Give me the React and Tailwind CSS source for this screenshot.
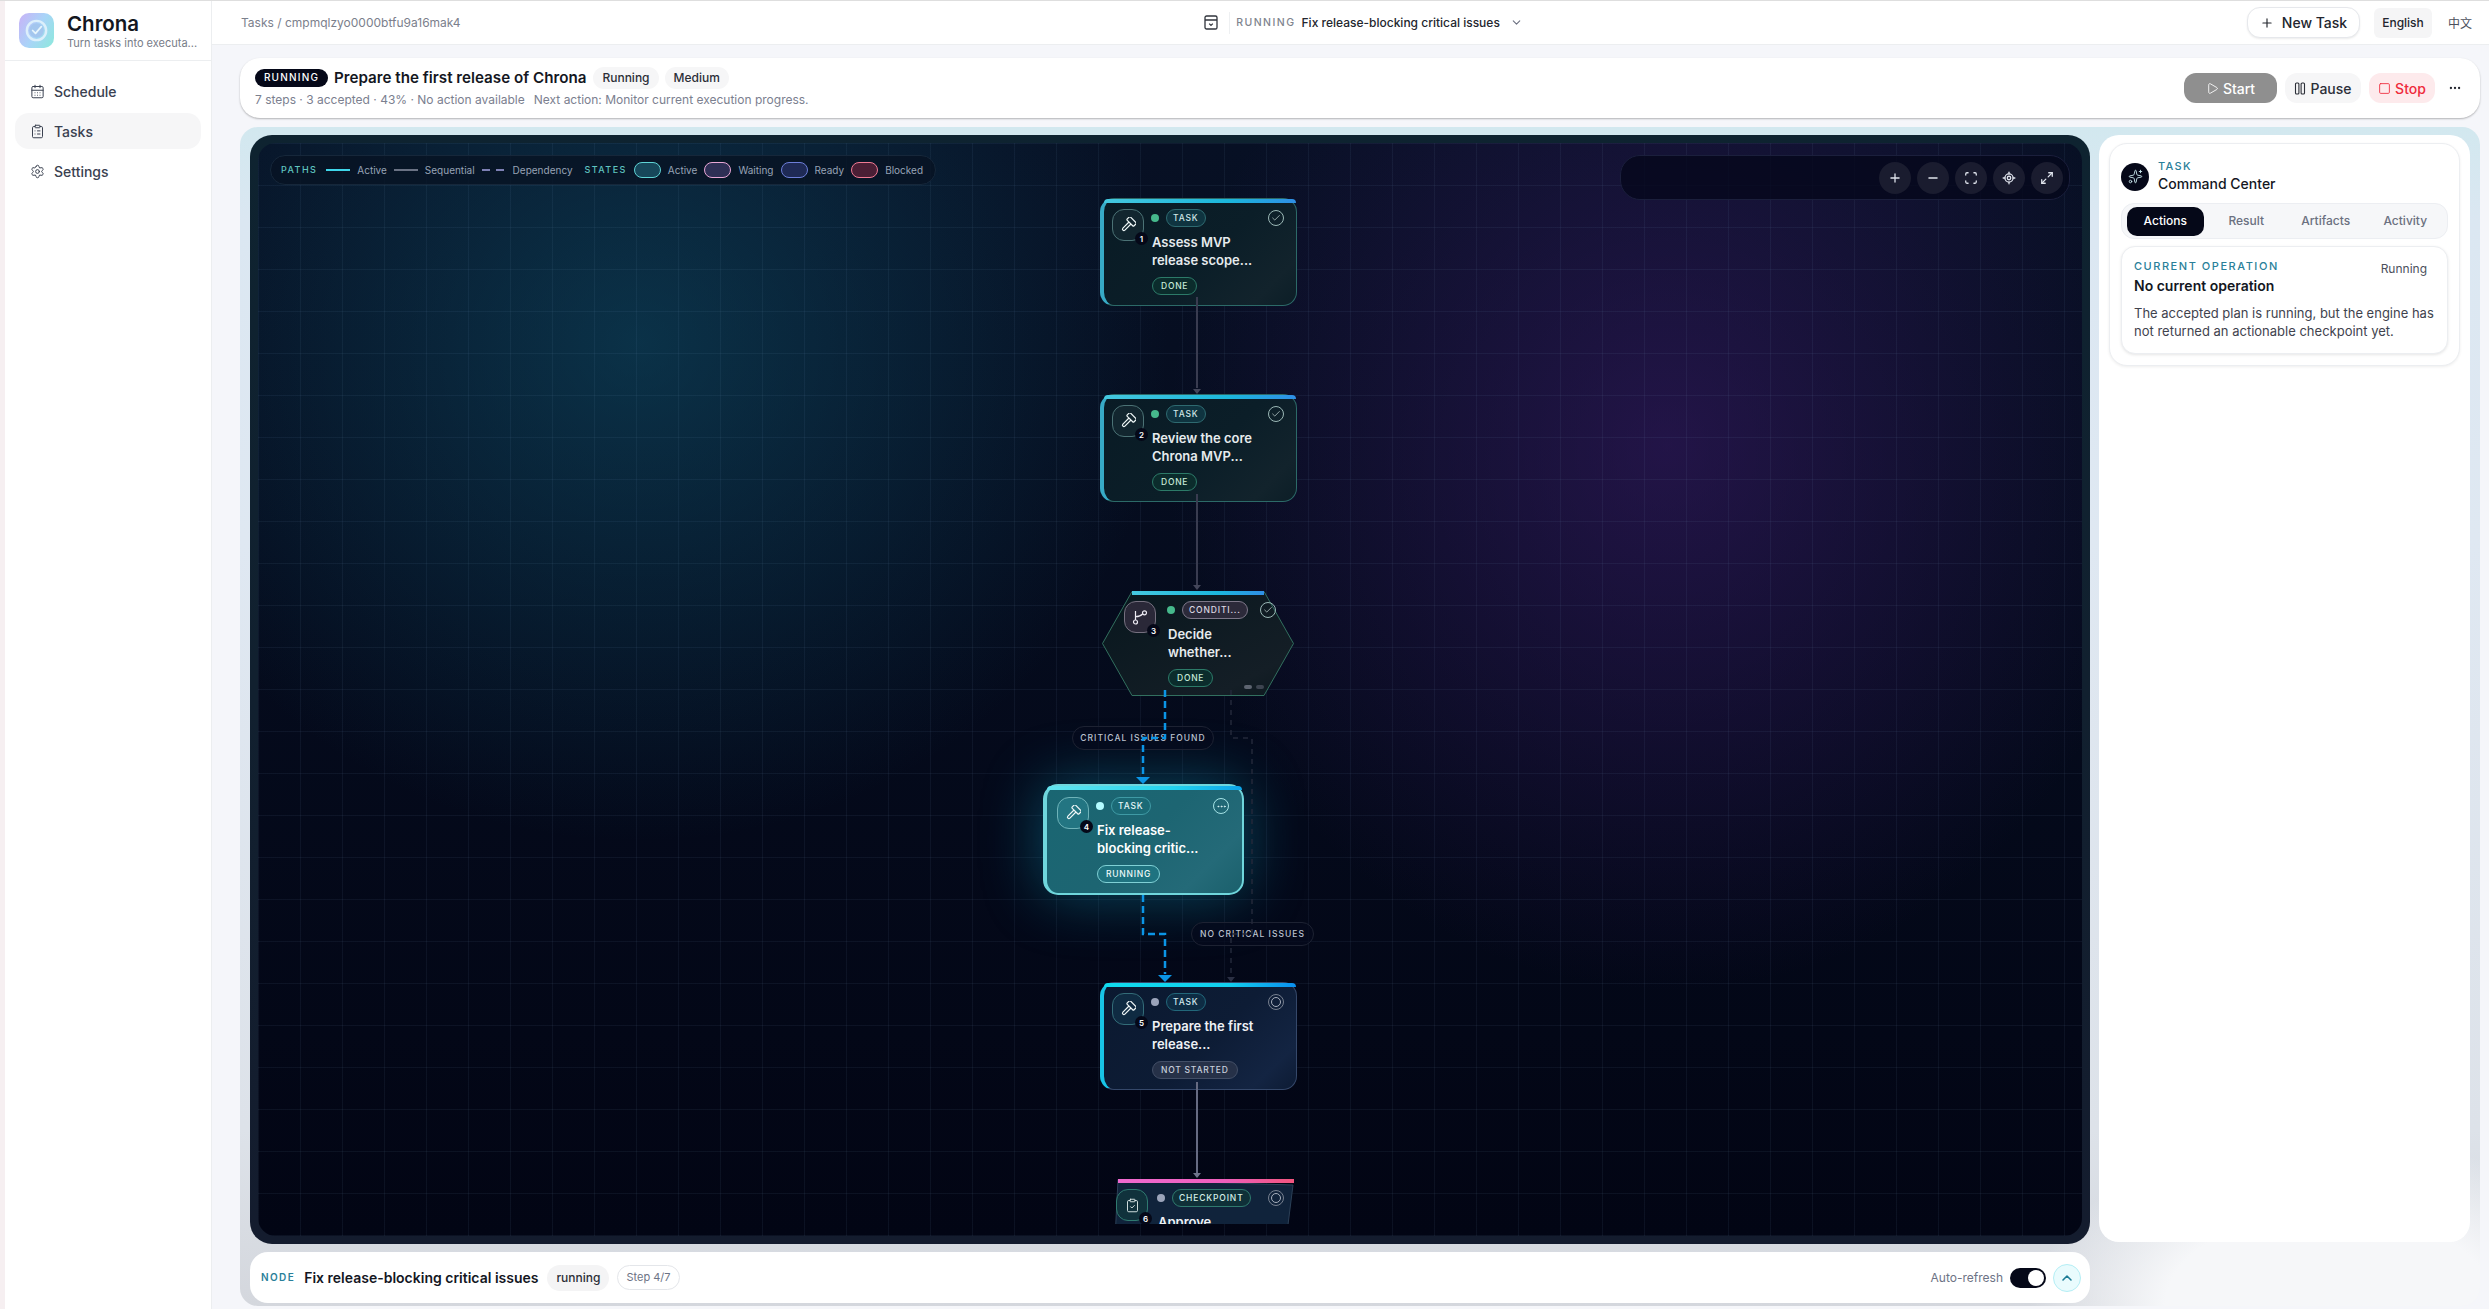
import React from 'react';
import {
  CalendarDays, ClipboardList, Settings, Plus, Minus, Scan, LocateFixed, Maximize2, Play, Square,
  Ellipsis, ChevronDown, ChevronUp, Sparkles, ClipboardCheck, Check,
} from 'lucide-react';

const Logo = () => (
  <div className="flex h-[35px] w-[35px] shrink-0 items-center justify-center rounded-[10px] bg-[linear-gradient(120deg,#c9b2f7_0%,#a9d4f8_50%,#8ce9dc_100%)]">
    <svg width="27" height="27" viewBox="0 0 28 28" fill="none">
      <circle cx="14" cy="14" r="10" stroke="#dcefFb" strokeWidth="2.5" />
      <circle cx="14" cy="14" r="7.5" fill="#a3c6ee" />
      <path d="M10 14l3 3 6-7" stroke="#e6f5fc" strokeWidth="1.8" strokeLinecap="round" strokeLinejoin="round" />
    </svg>
  </div>
);

const HammerIcon = () => (
  <svg width="16" height="16" viewBox="0 0 16 16" fill="none" stroke="#eef6f6" strokeWidth="1.2" strokeLinejoin="round">
    <g transform="rotate(45 8 8)">
      <rect x="3.2" y="0.6" width="9.6" height="4.6" rx="1" />
      <path d="M6.6 5.2v8.6a1.4 1.4 0 0 0 2.8 0V5.2" />
    </g>
  </svg>
);

const BranchIcon = () => (
  <svg width="16" height="16" viewBox="0 0 16 16" fill="none" stroke="#eceaf2" strokeWidth="1.2">
    <circle cx="3.5" cy="13" r="2" />
    <circle cx="12.5" cy="3.8" r="2" />
    <path d="M3.5 11V2M3.8 7.6c2.6 0 5-.6 6.8-2.6" />
  </svg>
);

const ArchiveIcon = () => (
  <svg width="14" height="15" viewBox="0 0 14 15" fill="none" stroke="#30343c" strokeWidth="1.3">
    <rect x="1" y="1" width="12" height="13" rx="1.6" />
    <path d="M1 5h12M5.2 8.6l1.8 1.8 1.8-1.8" />
  </svg>
);

const StatusRing = ({ kind }) => {
  if (kind === 'done') {
    return (
      <div className="flex h-4 w-4 shrink-0 items-center justify-center rounded-full border border-[#9bb8b6]">
        <Check size={10} color="#c9dbd9" strokeWidth={1.7} />
      </div>
    );
  }
  if (kind === 'running') {
    return (
      <div className="flex h-4 w-4 shrink-0 items-center justify-center rounded-full border border-[#a5e3e6]">
        <Ellipsis size={11} color="#dff7f8" strokeWidth={2} />
      </div>
    );
  }
  return (
    <div className="flex h-4 w-4 shrink-0 items-center justify-center rounded-full border border-[#77808f]">
      <div className="h-[10px] w-[10px] rounded-full border border-[#a8b0bd]" />
    </div>
  );
};

const nodes = [
  {
    n: 1, x: 1100, y: 198, w: 197, h: 108, tag: 'TASK', title: ['Assess MVP', 'release scope...'], status: 'DONE', ring: 'done',
    shell: 'rounded-[14px] border border-[#2c6a68] border-l-[4px] border-l-[#37aac6] bg-[linear-gradient(135deg,#091b25_0%,#0b1e28_55%,#12232c_85%,#0c1e27_100%)] pl-[8px] pr-[12px] pt-[10px]',
    bar: 'left-0 right-0 top-0 rounded-t-[12px] bg-[linear-gradient(90deg,#45c8df,#1bb7dc_65%,#2f8fe6)]',
    gap: 'gap-[8px]', dot: 'bg-[#46b98c]', box: 'border-[#4b7275] bg-[#12262f]',
    tagCls: 'border-[#2e6a70] bg-[#0f3440] text-[#cfe6e6]', statusCls: 'border-[#2c7a68] bg-[#0b2c2c] text-[#c7ead9]', titleCls: 'text-[#e6ebee]',
  },
  {
    n: 2, x: 1100, y: 394, w: 197, h: 108, tag: 'TASK', title: ['Review the core', 'Chrona MVP...'], status: 'DONE', ring: 'done',
    shell: 'rounded-[14px] border border-[#2c6a68] border-l-[4px] border-l-[#37aac6] bg-[linear-gradient(135deg,#091b25_0%,#0b1e28_55%,#12232c_85%,#0c1e27_100%)] pl-[8px] pr-[12px] pt-[10px]',
    bar: 'left-0 right-0 top-0 rounded-t-[12px] bg-[linear-gradient(90deg,#45c8df,#1bb7dc_65%,#2f8fe6)]',
    gap: 'gap-[8px]', dot: 'bg-[#46b98c]', box: 'border-[#4b7275] bg-[#12262f]',
    tagCls: 'border-[#2e6a70] bg-[#0f3440] text-[#cfe6e6]', statusCls: 'border-[#2c7a68] bg-[#0b2c2c] text-[#c7ead9]', titleCls: 'text-[#e6ebee]',
  },
  {
    n: 3, x: 1102, y: 591, w: 192, h: 105, tag: 'CONDITI...', title: ['Decide', 'whether...'], status: 'DONE', ring: 'done',
    poly: '30,0.5 162,0.5 191.5,52.5 162,104.5 30,104.5 0.5,52.5', stroke: '#32705f', fill: 'url(#hexFill)',
    shell: 'pl-[22px] pr-[18px] pt-[10px]',
    bar: 'left-[30px] right-[30px] top-0 bg-[linear-gradient(90deg,#45c8df,#1bb7dc_65%,#2f8fe6)]',
    gap: 'gap-[12px]', dot: 'bg-[#46b98c]', box: 'border-[#75707f] bg-[#2a2838]',
    tagCls: 'border-[#7d7789] bg-[#2c2a3a] text-[#dcd8e2]', statusCls: 'border-[#2c7a68] bg-[#0b2c2c] text-[#c7ead9]', titleCls: 'text-[#e6ebee]',
  },
  {
    n: 4, x: 1043, y: 784, w: 201, h: 111, tag: 'TASK', title: ['Fix release-', 'blocking critic...'], status: 'RUNNING', ring: 'running',
    shell: 'rounded-[15px] border-[2px] border-[#6fd6dc] border-l-[4px] bg-[linear-gradient(135deg,#1a6672_0%,#1d6572_50%,#246a78_80%,#1b606c_100%)] pl-[10px] pr-[13px] pt-[11px] shadow-[0_0_60px_rgba(20,190,225,0.36)]',
    bar: 'left-0 right-0 top-0 rounded-t-[12px] bg-[linear-gradient(90deg,#64e4ee,#22d3ee_65%,#0ea5e9)]',
    gap: 'gap-[8px]', dot: 'bg-[#b4fbff]', box: 'border-[#6fb3b9] bg-[#237582]',
    tagCls: 'border-[#3f9aa5] bg-[#1b6a76] text-[#e4f6f7]', statusCls: 'border-[#7fd0d5] bg-[#1f7380] text-[#eefafa]', titleCls: 'text-white',
  },
  {
    n: 5, x: 1100, y: 982, w: 197, h: 108, tag: 'TASK', title: ['Prepare the first', 'release...'], status: 'NOT STARTED', ring: 'idle',
    shell: 'rounded-[14px] border border-[#35486a] border-l-[4px] border-l-[#18c4e6] bg-[linear-gradient(135deg,#0b1930_0%,#0d1c35_55%,#132442_85%,#0d1b34_100%)] pl-[8px] pr-[12px] pt-[10px]',
    bar: 'left-0 right-0 top-0 rounded-t-[12px] bg-[linear-gradient(90deg,#10dcee,#12cfee_65%,#0a8fee)]',
    gap: 'gap-[8px]', dot: 'bg-[#9ba4ba]', box: 'border-[#336c78] bg-[#0f2b42]',
    tagCls: 'border-[#22677a] bg-[#0e2c44] text-[#d2e8ee]', statusCls: 'border-[#424e66] bg-[#263148] text-[#c8cfdc]', titleCls: 'text-[#eef1f5]',
  },
  {
    n: 6, x: 1112, y: 1179, w: 183, h: 110, tag: 'CHECKPOINT', title: ['Approve'], ring: 'idle',
    poly: '6,0.5 181,6 168,109.5 0.5,109.5', stroke: '#2c4057', fill: '#10233b',
    shell: 'pl-[4px] pr-[11px] pt-[10px]',
    bar: 'left-[6px] right-[1px] top-0 bg-[linear-gradient(90deg,#f06ad0,#ee5fbd_60%,#f2557e)]',
    gap: 'gap-[10px]', dot: 'bg-[#9ba4ba]', box: 'border-[#2f7a70] bg-[#10323c]',
    tagCls: 'border-[#2f7a6e] bg-[#0f3038] text-[#d6efe8]', titleCls: 'text-[#eef1f5]',
  },
];

const GraphNode = ({ node }) => (
  <div
    className={`absolute flex items-start ${node.gap} ${node.shell}`}
    style={{ left: node.x - 258, top: node.y - 143, width: node.w, height: node.h }}
  >
    {node.poly && (
      <svg className="absolute left-0 top-0" width={node.w} height={node.h} viewBox={`0 0 ${node.w} ${node.h}`}>
        <polygon points={node.poly} fill={node.fill} stroke={node.stroke} />
      </svg>
    )}
    <div className={`absolute h-[4px] ${node.bar}`} />
    <div className={`relative flex h-8 w-8 shrink-0 items-center justify-center rounded-[12px] border ${node.box}`}>
      {node.n === 3 ? <BranchIcon /> : node.n === 6 ? <ClipboardCheck size={15} color="#e8f4f2" strokeWidth={1.4} /> : <HammerIcon />}
      <div className="absolute bottom-[-5px] right-[-5px] flex h-[13px] w-[13px] items-center justify-center rounded-full bg-[#050818] text-[8px] font-semibold text-white">
        {node.n}
      </div>
    </div>
    <div className="relative min-w-0 flex-1">
      <div className="flex h-[18px] items-center gap-[7px]">
        <div className={`-ml-px h-2 w-2 shrink-0 rounded-full ${node.dot}`} />
        <div className={`flex h-[18px] items-center rounded-full border px-[6px] text-[8.5px] font-medium tracking-[0.1em] ${node.tagCls}`}>{node.tag}</div>
        <div className="ml-auto">
          <StatusRing kind={node.ring} />
        </div>
      </div>
      <div className={`mt-[6px] text-[13px] font-semibold leading-[18px] ${node.titleCls}`}>
        {node.title.map((line) => <div key={line} className="whitespace-nowrap">{line}</div>)}
      </div>
      {node.status && (
        <div className={`mt-[8px] flex h-[18px] w-fit items-center rounded-full border px-[8px] text-[8.5px] font-medium tracking-[0.09em] ${node.statusCls}`}>
          {node.status}
        </div>
      )}
    </div>
    {node.n === 3 && (
      <div className="absolute bottom-[7px] right-[30px] flex gap-[4px]">
        <div className="h-[4px] w-[8px] rounded-full bg-[#5d6470]" />
        <div className="h-[4px] w-[8px] rounded-full bg-[#3d4450]" />
      </div>
    )}
  </div>
);

const Edges = () => (
  <svg className="absolute left-0 top-0" width="1824" height="1081" viewBox="258 143 1824 1081" fill="none">
    <defs>
      <linearGradient id="hexFill" x1="0" y1="0" x2="1" y2="1">
        <stop offset="0" stopColor="#08171e" />
        <stop offset="0.8" stopColor="#141e26" />
        <stop offset="1" stopColor="#0c181e" />
      </linearGradient>
    </defs>
    <path d="M1197 297V388" stroke="#393c50" strokeWidth="2" />
    <path d="M1193 389h8l-4 5z" fill="#43465a" />
    <path d="M1197 494V585" stroke="#393c50" strokeWidth="2" />
    <path d="M1193 585h8l-4 5z" fill="#43465a" />
    <path d="M1231 690V738H1252V934H1231V975" stroke="#23283a" strokeWidth="1.5" strokeDasharray="5 5" />
    <path d="M1227 977h8l-4 5z" fill="#2b3044" />
    <path d="M1197 1082V1173" stroke="#666b82" strokeWidth="2" />
    <path d="M1193 1173h8l-4 5z" fill="#6f748b" />
    <path d="M1165 690V738H1143V776" stroke="#0b95e6" strokeWidth="2.5" strokeDasharray="7 4" />
    <path d="M1136 777h14l-7 7z" fill="#0b95e6" />
    <path d="M1143 895V934H1165V974" stroke="#0b95e6" strokeWidth="2.5" strokeDasharray="7 4" />
    <path d="M1158 975h14l-7 7z" fill="#0b95e6" />
  </svg>
);

const EdgeLabel = ({ x, y, w, children }) => (
  <div
    className="absolute flex h-[24px] items-center justify-center whitespace-nowrap rounded-full border border-[#1d2232] bg-[#060a1c]/70 text-[8.5px] font-medium tracking-[0.12em] text-[#bcc3d0]"
    style={{ left: x - 258, top: y - 143, width: w }}
  >
    {children}
  </div>
);

const Swatch = ({ cls }) => <div className={`h-4 w-[27px] rounded-[8px] border ${cls}`} />;

const Legend = () => (
  <div className="absolute left-[12px] top-[12px] flex h-[30px] w-[666px] items-center gap-[7px] rounded-[15px] border border-[#16273a] bg-[#071323]/80 pl-[10px] text-[10px] text-[#97a3b6]">
    <span className="text-[9px] font-medium tracking-[0.16em] text-[#5fc4c0]">PATHS</span>
    <div className="ml-[2px] h-[2px] w-[24px] bg-[#3fd6ea]" />
    <span>Active</span>
    <div className="h-[2px] w-[24px] bg-[#6a7284]" />
    <span>Sequential</span>
    <div className="flex w-[22px] justify-between">
      <div className="h-[2px] w-[8px] bg-[#7d80b4]" />
      <div className="h-[2px] w-[8px] bg-[#7d80b4]" />
    </div>
    <span className="ml-[2px]">Dependency</span>
    <span className="ml-[5px] text-[9px] font-medium tracking-[0.16em] text-[#5fc4c0]">STATES</span>
    <Swatch cls="border-[#5fd3d5] bg-[#17475a]" />
    <span>Active</span>
    <Swatch cls="border-[#e9a7d6] bg-[#2e2f55]" />
    <span>Waiting</span>
    <Swatch cls="border-[#6c7ed8] bg-[#1e2a55]" />
    <span>Ready</span>
    <Swatch cls="border-[#f07a93] bg-[#4a1f35]" />
    <span>Blocked</span>
  </div>
);

const ToolButton = ({ children }) => (
  <div className="flex h-8 w-8 items-center justify-center rounded-full bg-[#1a1c2f] text-[#dfe3ec]">{children}</div>
);

const Toolbar = () => (
  <div className="absolute right-[12px] top-[12px] flex h-[45px] w-[450px] items-center justify-end gap-[6px] rounded-[20px] border border-[#1b1f3c] bg-[#05071c]/80 pr-[6px]">
    <ToolButton><Plus size={14} strokeWidth={2.2} /></ToolButton>
    <ToolButton><Minus size={14} strokeWidth={2.2} /></ToolButton>
    <ToolButton><Scan size={14} strokeWidth={2.2} /></ToolButton>
    <ToolButton><LocateFixed size={14} strokeWidth={2.2} /></ToolButton>
    <ToolButton><Maximize2 size={14} strokeWidth={2.2} /></ToolButton>
  </div>
);

const Canvas = () => (
  <div className="h-[1109px] rounded-[22px] bg-[linear-gradient(180deg,#0e2330_0%,#11202f_50%,#141c2e_100%)] p-[8px]">
    <div className="relative h-full overflow-hidden rounded-[18px] bg-[#03061a] bg-[radial-gradient(ellipse_680px_640px_at_380px_200px,rgba(16,92,118,0.46),transparent_78%),radial-gradient(ellipse_640px_700px_at_1409px_302px,rgba(58,26,104,0.55),transparent_78%),linear-gradient(180deg,#071024,#020514)]">
      <div className="absolute inset-0 bg-[linear-gradient(rgba(130,170,210,0.075)_1px,transparent_1px),linear-gradient(90deg,rgba(130,170,210,0.075)_1px,transparent_1px)] bg-[size:42px_42px]" />
      <div className="absolute left-0 right-0 top-0 h-[1081px] overflow-hidden">
        {nodes.map((node) => <GraphNode key={node.n} node={node} />)}
        <EdgeLabel x={1072} y={726} w={142}>CRITICAL ISSUES FOUND</EdgeLabel>
        <EdgeLabel x={1191} y={922} w={123}>NO CRITICAL ISSUES</EdgeLabel>
        <Edges />
      </div>
      <Legend />
      <Toolbar />
    </div>
  </div>
);

const NodeBar = () => (
  <div className="flex h-[51px] items-center rounded-[18px] bg-white pl-[11px] pr-[9px]">
    <span className="text-[10px] font-semibold tracking-[0.14em] text-[#2a7f9a]">NODE</span>
    <span className="ml-[9px] text-[14px] font-semibold text-[#14171f]">Fix release-blocking critical issues</span>
    <span className="ml-[9px] rounded-full bg-[#f4f4f5] px-[9px] py-[4px] text-[12px] font-medium text-[#2c2f38]">running</span>
    <span className="ml-[8px] rounded-full border border-[#e4e6ea] px-[8px] py-[3px] text-[11px] text-[#6d7385]">Step 4/7</span>
    <span className="ml-auto text-[12px] text-[#6d7385]">Auto-refresh</span>
    <div className="ml-[7px] flex h-[20px] w-[36px] items-center justify-end rounded-full bg-[#050818] pr-[2px]">
      <div className="h-4 w-4 rounded-full bg-white" />
    </div>
    <div className="ml-[7px] flex h-[28px] w-[28px] items-center justify-center rounded-full border border-[#b4eef5] bg-[#e9fbfd]">
      <ChevronUp size={16} color="#1c7c96" strokeWidth={2.4} />
    </div>
  </div>
);

const CommandPanel = () => (
  <div className="h-[1107px] w-[371px] shrink-0 rounded-[20px] bg-white px-[10px] pt-[8px]">
    <div className="h-[223px] rounded-[18px] border border-[#eceef1] bg-white px-[11px] pt-[16px] shadow-[0_1px_3px_rgba(0,0,0,0.07)]">
      <div className="flex items-center gap-[9px]">
        <div className="flex h-[28px] w-[28px] items-center justify-center rounded-full bg-[#050818]">
          <Sparkles size={15} color="#cfeef2" strokeWidth={1.4} />
        </div>
        <div>
          <div className="text-[11px] font-medium leading-[12px] tracking-[0.12em] text-[#2a7f9a]">TASK</div>
          <div className="mt-[3px] text-[14px] font-medium leading-[18px] text-[#14171f]">Command Center</div>
        </div>
      </div>
      <div className="mt-[10px] grid h-[36px] grid-cols-4 items-center rounded-[13px] border border-[#eceef2] bg-[#f6f7f9] pl-[5px] pr-[2px] text-center text-[12px] font-medium text-[#6b7080]">
        <div className="mr-[3px] flex h-[29px] items-center justify-center rounded-[10px] bg-[#050818] text-white">Actions</div>
        <div>Result</div>
        <div>Artifacts</div>
        <div>Activity</div>
      </div>
      <div className="mt-[7px] h-[108px] rounded-[14px] border border-[#eceef1] bg-white px-[12px] pt-[12px] shadow-[0_1px_3px_rgba(0,0,0,0.1)]">
        <div className="flex items-start justify-between">
          <div className="text-[11px] font-medium leading-[14px] tracking-[0.14em] text-[#2a7f9a]">CURRENT OPERATION</div>
          <div className="mr-[8px] mt-[3px] text-[12px] leading-[14px] text-[#4c505c]">Running</div>
        </div>
        <div className="text-[14px] font-semibold leading-[20px] text-[#14171f]">No current operation</div>
        <p className="mt-[8px] text-[13px] leading-[18px] text-[#3f434e]">
          The accepted plan is running, but the engine has not returned an actionable checkpoint yet.
        </p>
      </div>
    </div>
  </div>
);

const NavItem = ({ icon, label, active }) => (
  <div className={`flex h-9 items-center gap-[9px] rounded-[14px] px-[15px] text-[14px] font-medium text-[#3a4150] ${active ? 'bg-[#f6f6f7]' : ''}`}>
    {icon}
    <span>{label}</span>
  </div>
);

export default function App() {
  return (
    <div className="flex h-[1309px] w-full overflow-hidden border-t border-[#dedede] bg-[#f6eff1] pl-[5px] [font-family:Inter,sans-serif]">
      <aside className="flex w-[207px] shrink-0 flex-col border-r border-[#eceef0] bg-white">
        <div className="flex h-[60px] items-center gap-[13px] border-b border-[#eceef0] px-[14px]">
          <Logo />
          <div className="min-w-0">
            <div className="text-[20.5px] font-semibold leading-[24px] text-[#14171f]">Chrona</div>
            <div className="whitespace-nowrap text-[11px] leading-[14px] text-[#777c88]">Turn tasks into executa...</div>
          </div>
        </div>
        <nav className="flex flex-col gap-[4px] px-[10px] pt-[12px]">
          <NavItem icon={<CalendarDays size={15} strokeWidth={1.6} />} label="Schedule" />
          <NavItem icon={<ClipboardList size={15} strokeWidth={1.6} />} label="Tasks" active />
          <NavItem icon={<Settings size={15} strokeWidth={1.6} />} label="Settings" />
        </nav>
      </aside>

      <main className="flex min-w-0 flex-1 flex-col bg-[#f5f6fa]">
        <header className="grid h-[44px] shrink-0 grid-cols-[1fr_auto_1fr] items-center border-b border-[#eceef0] bg-white pl-[29px] pr-[17px]">
          <div className="text-[12px] text-[#7b808c]">Tasks / cmpmqlzyo0000btfu9a16mak4</div>
          <div className="ml-[14px] flex items-center">
            <ArchiveIcon />
            <div className="ml-[11px] h-[22px] w-px bg-[#eef0f2]" />
            <span className="ml-[6px] text-[10.5px] font-medium tracking-[0.14em] text-[#80848e]">RUNNING</span>
            <span className="ml-[6px] text-[12px] font-medium text-[#23262e]">Fix release-blocking critical issues</span>
            <ChevronDown className="ml-[10px]" size={13} color="#6b7080" />
          </div>
          <div className="flex items-center justify-end">
            <div className="flex h-[31px] w-[113px] items-center justify-center gap-[8px] rounded-[13px] border border-[#e6e8ec] bg-white text-[14px] font-medium text-[#23262e] shadow-[0_1px_2px_rgba(0,0,0,0.08)]">
              <Plus size={14} />
              New Task
            </div>
            <div className="ml-[14px] flex h-[30px] w-[58px] items-center justify-center rounded-[6px] bg-[#f5f5f6] text-[12px] font-medium text-[#23262e]">English</div>
            <div className="ml-[16px] text-[12px] text-[#4c505c] [font-family:'Noto_Sans_CJK_SC',sans-serif]">中文</div>
          </div>
        </header>

        <div className="flex min-h-0 flex-1 flex-col pl-[28px] pr-[9px]">
          <section className="mt-[13px] flex h-[60px] shrink-0 items-center rounded-[20px] bg-white pl-[15px] pr-[18px] shadow-[0_1px_2px_rgba(0,0,0,0.28)]">
            <div className="-mt-[2px]">
              <div className="flex items-center">
                <span className="flex h-[18px] w-[73px] items-center justify-center rounded-full bg-[#050818] text-[10px] font-medium tracking-[0.12em] text-white">RUNNING</span>
                <span className="ml-[6px] text-[15.2px] font-semibold text-[#14171f]">Prepare the first release of Chrona</span>
                <span className="ml-[7px] rounded-full bg-[#f6f6f7] px-[9px] py-[2px] text-[12px] font-medium text-[#2c2f38]">Running</span>
                <span className="ml-[6px] rounded-full bg-[#f6f6f7] px-[9px] py-[2px] text-[12px] font-medium text-[#2c2f38]">Medium</span>
              </div>
              <div className="mt-[3px] flex text-[12px] leading-[15px] text-[#7b808f]">
                <span>7 steps · 3 accepted · 43% · No action available</span>
                <span className="ml-[9px]">Next action: Monitor current execution progress.</span>
              </div>
            </div>
            <div className="ml-auto flex items-center gap-[8px]">
              <div className="flex h-[30px] w-[93px] items-center justify-center gap-[4px] rounded-[12px] bg-[#8f8f8f] text-[14px] font-medium text-white">
                <Play size={13} strokeWidth={1.6} />
                Start
              </div>
              <div className="flex h-[30px] w-[76px] items-center justify-center gap-[4px] rounded-[12px] bg-[#f6f6f7] text-[14px] font-medium text-[#2c2f38]">
                <svg width="12" height="13" viewBox="0 0 12 13" fill="none" stroke="#2c2f38" strokeWidth="1.1">
                  <rect x="1.5" y="1" width="3.4" height="11" rx="1" />
                  <rect x="7.1" y="1" width="3.4" height="11" rx="1" />
                </svg>
                Pause
              </div>
              <div className="flex h-[30px] w-[66px] items-center justify-center gap-[4px] rounded-[12px] bg-[#fdeaec] text-[14px] font-medium text-[#ef2b3c]">
                <Square size={13} strokeWidth={1.6} />
                Stop
              </div>
              <Ellipsis className="ml-[5px]" size={14} color="#23262e" />
            </div>
          </section>

          <section className="mb-[3px] mt-[9px] flex min-h-0 flex-1 gap-[9px] rounded-[18px] bg-[radial-gradient(ellipse_300px_170px_at_2090px_1179px,#f6f7f9_55%,transparent),linear-gradient(180deg,#d2e8ef_0%,#dbe7f2_8%,#dfe8f2_35%,#dde2e9_85%,#d4d7dd_100%)] pl-[10px] pr-[10px] pt-[8px]">
            <div className="flex w-[1840px] shrink-0 flex-col gap-[8px]">
              <Canvas />
              <NodeBar />
            </div>
            <CommandPanel />
          </section>
        </div>
      </main>
    </div>
  );
}
